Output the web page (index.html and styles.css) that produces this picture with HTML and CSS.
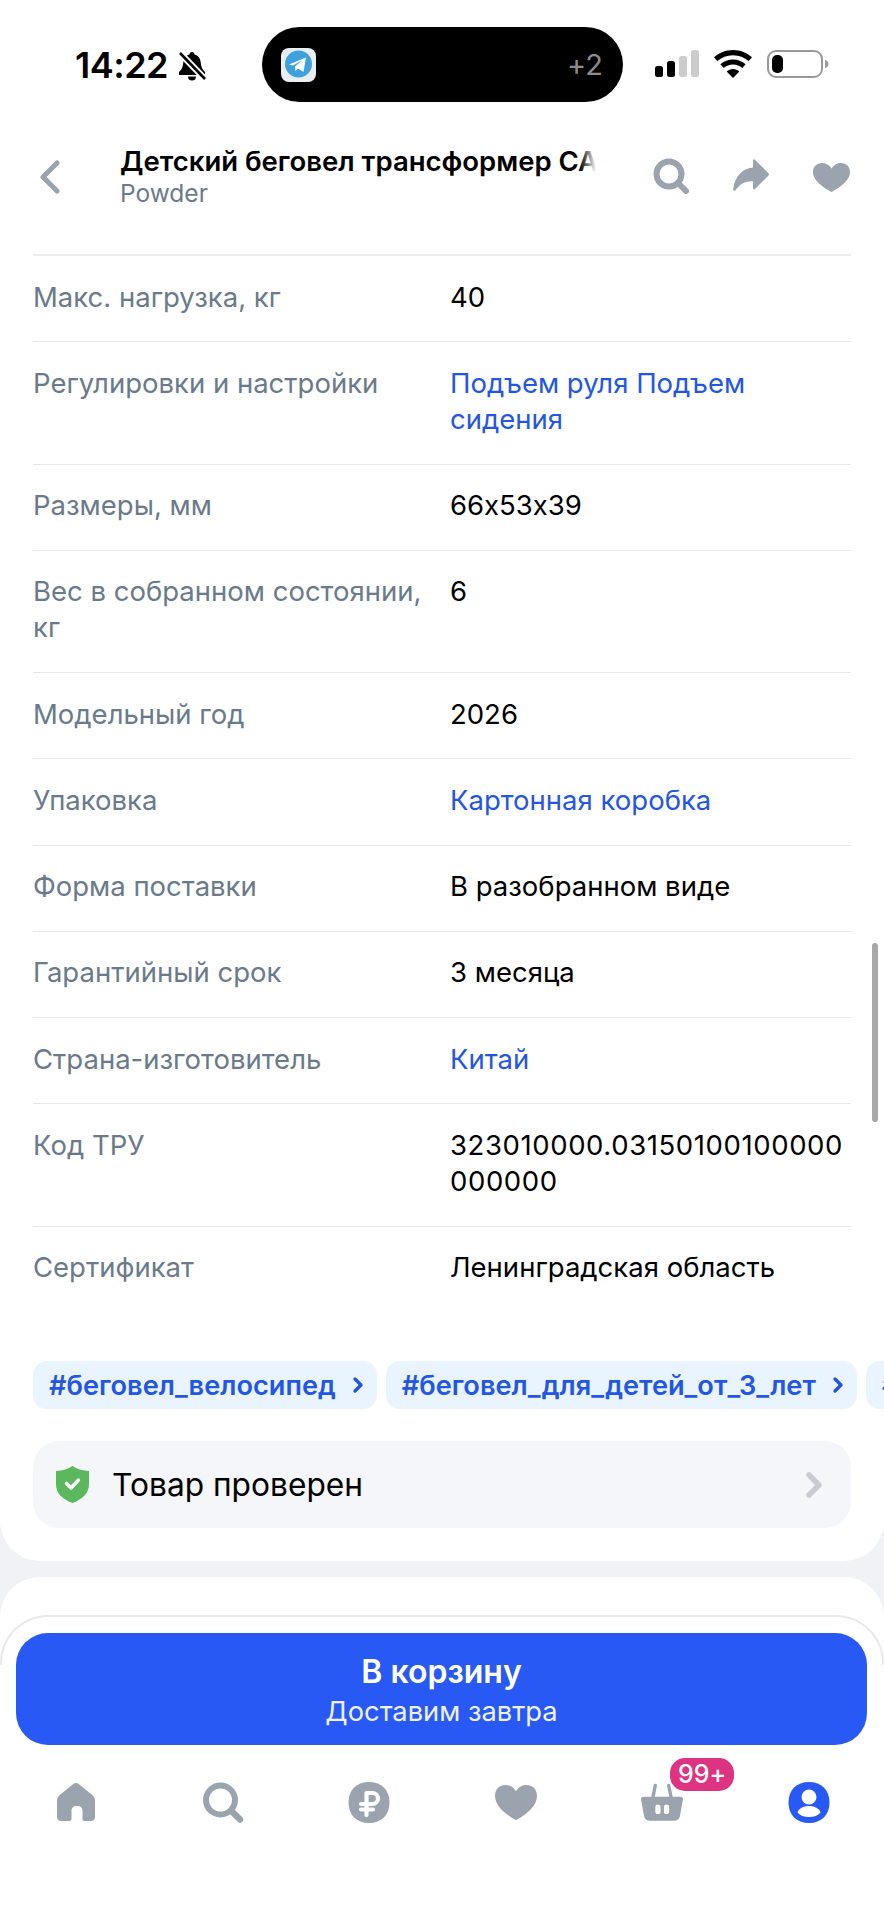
FILE: index.html
```html
<!DOCTYPE html>
<html lang="ru">
<head>
<meta charset="utf-8">
<title>Детский беговел</title>
<link rel="stylesheet" href="styles.css">
</head>
<body>
<div class="page">
  <div class="status">
    <div class="status-left">
      <span class="time">14:22</span>
      <svg class="bell" viewBox="0 0 30 31"><path d="M15 1c1.500 0 2.400 1 2.600 2.400 3.600 1 5.800 4 6.100 7.800.3 4.500 1.300 7 4.300 9.800v3H2v-3c3-2.800 4-5.300 4.300-9.800.3-3.800 2.500-6.800 6.100-7.800C12.600 2 13.500 1 15 1z" fill="#000"/><path d="M11 25.500h8a4 4 0 0 1-8 0z" fill="#000"/><path d="M3 2l25 26" stroke="#fff" stroke-width="6.500"/><path d="M3 2l25 26" stroke="#000" stroke-width="2.600"/></svg>
    </div>
    <div class="island">
      <svg class="tg" viewBox="0 0 35 34"><rect width="35" height="34" rx="8" fill="#e9eef3"/><circle cx="17.500" cy="16" r="13.500" fill="#3fa0de"/><path d="M8 16.500 25 9.500 22.500 24l-5.500-3.500-2.500 2.500-.5-4.500 7.500-6.500-9.500 5.500z" fill="#fff"/></svg>
      <span class="more">+2</span>
    </div>
    <div class="status-right">
      <svg class="signal" viewBox="0 0 44 27"><rect x="0" y="16" width="8" height="11" rx="2.500" fill="#000"/><rect x="12" y="11" width="8" height="16" rx="2.500" fill="#000"/><rect x="24" y="6" width="8" height="21" rx="2.500" fill="#ccc"/><rect x="36" y="0" width="8" height="27" rx="2.500" fill="#ccc"/></svg>
      <svg class="wifi" viewBox="0 0 38 28"><path d="M19 0c7.300 0 13.900 2.800 19 7.300l-3.300 3.800C30.500 7.500 25 5.300 19 5.300S7.500 7.500 3.300 11.100L0 7.300C5.100 2.800 11.700 0 19 0z"/><path d="M19 9.500c4.800 0 9.200 1.800 12.600 4.800l-3.300 3.800c-2.500-2.200-5.800-3.500-9.300-3.500s-6.800 1.300-9.300 3.500l-3.300-3.800C9.800 11.300 14.200 9.500 19 9.500z"/><path d="M19 19c2.400 0 4.600.9 6.300 2.400L19 28l-6.300-6.600C14.400 19.900 16.600 19 19 19z"/></svg>
      <svg class="battery" viewBox="0 0 62 28"><rect x="1" y="1" width="54" height="26" rx="8" fill="none" stroke="#999" stroke-width="2"/><rect x="5" y="5" width="11" height="18" rx="5" fill="#000"/><path d="M58 10c2 .5 3.500 2 3.500 4s-1.500 3.500-3.500 4z" fill="#999"/></svg>
    </div>
  </div>

  <header class="top">
    <svg class="back" viewBox="0 0 22 34"><path d="M18 3 4 17l14 14" fill="none" stroke="#9aa3ae" stroke-width="5" stroke-linecap="round" stroke-linejoin="round"/></svg>
    <div class="top-text">
      <div class="top-title">Детский беговел трансформер CAR</div>
      <div class="top-sub">Powder</div>
    </div>
    <div class="top-actions">
      <svg class="ic-search" viewBox="0 0 36 36"><circle cx="16" cy="16" r="12.500" fill="none" stroke="#9aa3ae" stroke-width="6"/><path d="M25 25l8 8" stroke="#9aa3ae" stroke-width="6" stroke-linecap="round"/></svg>
      <svg class="ic-share" viewBox="0 0 36 32"><path d="M20 1.500c.3-1 1.300-1.500 2-.8l13.500 13.500c.6.600.6 1.600 0 2.200L22 30c-.8.800-2 .3-2-.8v-7c-7-.5-12.500 2-17.500 9-.8 1-2.500.6-2.400-.7C1.500 18 9 9.500 20 8.500z" fill="#9aa3ae"/></svg>
      <svg class="ic-heart" viewBox="0 0 37 29"><path d="M18.500 29C14 26.500 0 19 0 9 0 3.500 4 0 9 0c4 0 7.500 2 9.500 5.500C20.500 2 24 0 28 0c5 0 9 3.500 9 9 0 10-14 17.500-18.500 20z" fill="#9aa3ae"/></svg>
    </div>
  </header>

  <main class="card">
    <dl class="specs">
      <div class="row"><dt>Макс. нагрузка, кг</dt><dd>40</dd></div>
      <div class="row"><dt>Регулировки и настройки</dt><dd class="link">Подъем руля Подъем сидения</dd></div>
      <div class="row"><dt>Размеры, мм</dt><dd>66x53x39</dd></div>
      <div class="row"><dt>Вес в собранном состоянии, кг</dt><dd>6</dd></div>
      <div class="row"><dt>Модельный год</dt><dd>2026</dd></div>
      <div class="row"><dt>Упаковка</dt><dd class="link">Картонная коробка</dd></div>
      <div class="row"><dt>Форма поставки</dt><dd>В разобранном виде</dd></div>
      <div class="row"><dt>Гарантийный срок</dt><dd>3 месяца</dd></div>
      <div class="row"><dt>Страна-изготовитель</dt><dd class="link">Китай</dd></div>
      <div class="row"><dt>Код ТРУ</dt><dd class="break">323010000.03150100100000000000</dd></div>
      <div class="row"><dt>Сертификат</dt><dd>Ленинградская область</dd></div>
    </dl>

    <div class="tags">
      <a class="tag">#беговел_велосипед<svg class="tag-arrow" viewBox="0 0 12 18"><path d="M3 3l6 6-6 6" fill="none" stroke="#2456e6" stroke-width="3.400" stroke-linecap="round" stroke-linejoin="round"/></svg></a>
      <a class="tag">#беговел_для_детей_от_3_лет<svg class="tag-arrow" viewBox="0 0 12 18"><path d="M3 3l6 6-6 6" fill="none" stroke="#2456e6" stroke-width="3.400" stroke-linecap="round" stroke-linejoin="round"/></svg></a>
      <a class="tag">#беговел</a>
    </div>

    <div class="check">
      <svg class="shield" viewBox="0 0 33 37"><path d="M16.500 0C21 3 26 4.500 33 5v13c0 9-6 15-16.500 19C6 33 0 27 0 18V5c7-.5 12-2 16.500-5z" fill="#5cb85c"/><path d="M10.500 17.500l4.500 4.500 7.500-8" fill="none" stroke="#fff" stroke-width="3.400" stroke-linecap="round" stroke-linejoin="round"/></svg>
      <span class="check-text">Товар проверен</span>
      <svg class="check-arrow" viewBox="0 0 16 26"><path d="M3 3l10 10L3 23" fill="none" stroke="#c8ccd2" stroke-width="5.500" stroke-linecap="round" stroke-linejoin="round"/></svg>
    </div>
  </main>

  <section class="card-next"></section>

  <div class="sheet">
    <button class="buy">
      <span class="buy-main">В корзину</span>
      <span class="buy-sub">Доставим завтра</span>
    </button>
    <nav class="nav">
      <div class="nav-item"><svg class="nav-home" viewBox="0 0 38 38"><path d="M16 1.200c1.800-1.500 4.200-1.500 6 0l13 10.500c2 1.600 3 3.500 3 6V34c0 2.200-1.500 4-4 4h-6.500c-1 0-2-1-2-2v-8c0-3-1.500-5-5.500-5s-5.500 2-5.500 5v8c0 1-1 2-2 2H4c-2.500 0-4-1.800-4-4V17.700c0-2.500 1-4.400 3-6z" fill="#9aa3ae"/></svg></div>
      <div class="nav-item"><svg viewBox="0 0 41 41"><circle cx="18" cy="18" r="14.500" fill="none" stroke="#9aa3ae" stroke-width="6"/><path d="M29 29l8.500 8.500" stroke="#9aa3ae" stroke-width="6.500" stroke-linecap="round"/></svg></div>
      <div class="nav-item"><svg viewBox="0 0 41 41"><path d="M20.500 0C33 0 41 8 41 20.500S33 41 20.500 41 0 33 0 20.500 8 0 20.500 0z" fill="#9aa3ae"/><path d="M18 33V11h6a5 5 0 0 1 0 11H12.500M12.500 27.500h12" fill="none" stroke="#fff" stroke-width="4.200" stroke-linecap="round" stroke-linejoin="round"/></svg></div>
      <div class="nav-item"><svg viewBox="0 0 43 36"><path d="M21.500 36C16 33 0 24 0 11 0 4 5 0 11 0c4.500 0 8.300 2.500 10.500 6.500C23.700 2.500 27.500 0 32 0c6 0 11 4 11 11 0 13-16 22-21.500 25z" fill="#9aa3ae"/></svg></div>
      <div class="nav-item"><svg viewBox="0 0 44 40"><path d="M12 17 15 2M32 17 29 2" stroke="#9aa3ae" stroke-width="3.500" stroke-linecap="round"/><path d="M2 14h40c1 0 2 1 2 2.500L41 33c-.5 4-2.500 6-6 6H9c-3.500 0-5.500-2-6-6L0 16.500C0 15 1 14 2 14z" fill="#9aa3ae"/><rect x="15" y="22" width="5.500" height="10" rx="2.700" fill="#fff"/><rect x="24" y="22" width="5.500" height="10" rx="2.700" fill="#fff"/></svg><span class="badge">99+</span></div>
      <div class="nav-item"><svg viewBox="0 0 41 41"><path d="M20.500 0C33 0 41 8 41 20.500S33 41 20.500 41 0 33 0 20.500 8 0 20.500 0z" fill="#2859f5"/><circle cx="20.500" cy="15" r="7.500" fill="#fff"/><path d="M9 30.500c1-4 6-6.500 11.500-6.500S31 26.500 32 30.500c-2.500 3-6.500 4.500-11.500 4.500S11.500 33.500 9 30.500z" fill="#fff"/></svg></div>
    </nav>
  </div>

  <div class="scrollbar"></div>
</div>
</body>
</html>
```
FILE: styles.css
```css
* { box-sizing: border-box; margin: 0; padding: 0; }
html, body { width: 884px; height: 1920px; overflow: hidden; background: #fff; }
body { font-family: Inter, "Noto Sans", sans-serif; color: #000; font-feature-settings: "calt" 0; }
.page { position: relative; width: 884px; height: 1920px; background: #f0f2f5; overflow: hidden; }

.status { height: 110px; background: #fff; display: flex; align-items: flex-start; padding: 27px 54px 0 75px; }
.status-left { width: 187px; height: 75px; display: flex; align-items: center; gap: 9px; }
.time { font-size: 36px; font-weight: 600; letter-spacing: -0.5px; line-height: 40px; margin-top: 1px; }
.bell { width: 30px; height: 31px; margin-top: 3px; flex: none; }
.island { width: 361px; height: 75px; background: #000; border-radius: 38px; display: flex; align-items: center; justify-content: space-between; padding: 0 20px 0 19px; }
.tg { width: 35px; height: 34px; }
.more { color: #8c8c8c; font-size: 29px; line-height: 34px; }
.status-right { display: flex; margin-left: 32px; margin-top: 23px; align-items: flex-start; gap: 15px; }
.signal { width: 44px; height: 27px; }
.wifi { width: 38px; height: 28px; }
.battery { width: 62px; height: 28px; }

.top { height: 145px; background: #fff; display: flex; align-items: flex-start; padding-top: 31px; padding-left: 39px; }
.back { width: 22px; height: 34px; margin-top: 19px; }
.top-text { width: 476px; margin-left: 59px; overflow: hidden; position: relative; }
.top-text::after { content: ""; position: absolute; top: 0; right: 0; width: 16px; height: 40px; background: linear-gradient(to right, rgba(255,255,255,0), #fff); }
.top-title { font-size: 27.500px; font-weight: 600; line-height: 40px; white-space: nowrap; }
.top-sub { font-size: 24.500px; color: #6b7a8d; line-height: 30px; margin-top: -3px; }
.top-actions { display: flex; align-items: flex-start; margin-left: 57px; }
.ic-search { width: 36px; height: 36px; margin-top: 17px; }
.ic-share { width: 36px; height: 32px; margin-top: 18px; margin-left: 44px; }
.ic-heart { width: 37px; height: 29px; margin-top: 22px; margin-left: 44px; }

.card { background: #fff; border-radius: 0 0 40px 40px; padding: 0 33px 33px; }
.specs { border-top: 2px solid #eaecef; margin-top: -1px; }
.row { display: grid; grid-template-columns: 417px 1fr; padding: 22.500px 0 26.750px; border-bottom: 1px solid #e6e8ec; font-size: 27.500px; line-height: 36px; }
.row:last-child { border-bottom: 0; }
dt { color: #6b7a8a; padding-right: 10px; }
dd { color: #000; padding-right: 8px; }
.link { color: #2456e6; }
dd.break { word-break: break-all; letter-spacing: 0.6px; padding-right: 2px; }

.tags { display: flex; gap: 9px; margin-top: 49.500px; margin-right: -33px; overflow: hidden; }
.tag { flex: none; height: 48px; background: #e9f4fe; border-radius: 14px; display: flex; align-items: center; padding: 0 13px 0 16px; color: #2456e6; font-size: 27.200px; font-weight: 600; gap: 16px; }
.tag-arrow { width: 12px; height: 18px; }

.check { margin-top: 32px; height: 87px; border-radius: 26px; background: #f4f6fa; display: flex; align-items: center; padding: 0 29px 0 23px; }
.shield { width: 33px; height: 37px; }
.check-text { flex: 1; margin-left: 23px; font-size: 31.700px; }
.check-arrow { width: 16px; height: 26px; }

.card-next { margin-top: 16px; height: 342px; background: #fff; border-radius: 40px 40px 0 0; }

.sheet { position: absolute; left: 0; right: 0; top: 1615px; bottom: 0; background: #fff; border-radius: 48px 48px 0 0; padding: 18px 17px 0 16px; }
.sheet::before { content: ""; position: absolute; left: 0; right: 0; top: 0; height: 48px; border: 2px solid #e8e9eb; border-bottom: 0; border-radius: 48px 48px 0 0; }
.buy { display: flex; position: relative; width: 851px; height: 112px; flex-direction: column; align-items: center; justify-content: center; border: 0; border-radius: 32px; background: #2859f5; color: #fff; font-family: inherit; padding-top: 3px; }
.buy-main { font-size: 32px; font-weight: 600; line-height: 42px; }
.buy-sub { font-size: 27.300px; line-height: 38px; opacity: .92; }
.nav { display: grid; grid-template-columns: repeat(6, 146.600px); margin-top: 37px; margin-left: -13.300px; }
.nav-item { position: relative; height: 41px; display: flex; justify-content: center; }
.nav-item svg { width: 42px; height: 41px; }
.nav-item .nav-home { width: 38px; height: 38px; margin-top: 1px; }
.badge { position: absolute; left: 81px; top: -24px; width: 64px; height: 33px; border-radius: 15px; background: #dd3380; color: #fff; font-size: 25px; font-weight: 500; line-height: 33px; text-align: center; box-shadow: 0 0 0 1px #fff; }
.scrollbar { position: absolute; left: 872px; top: 943px; width: 6px; height: 179px; border-radius: 3px; background: #a8a8a8; }
```
